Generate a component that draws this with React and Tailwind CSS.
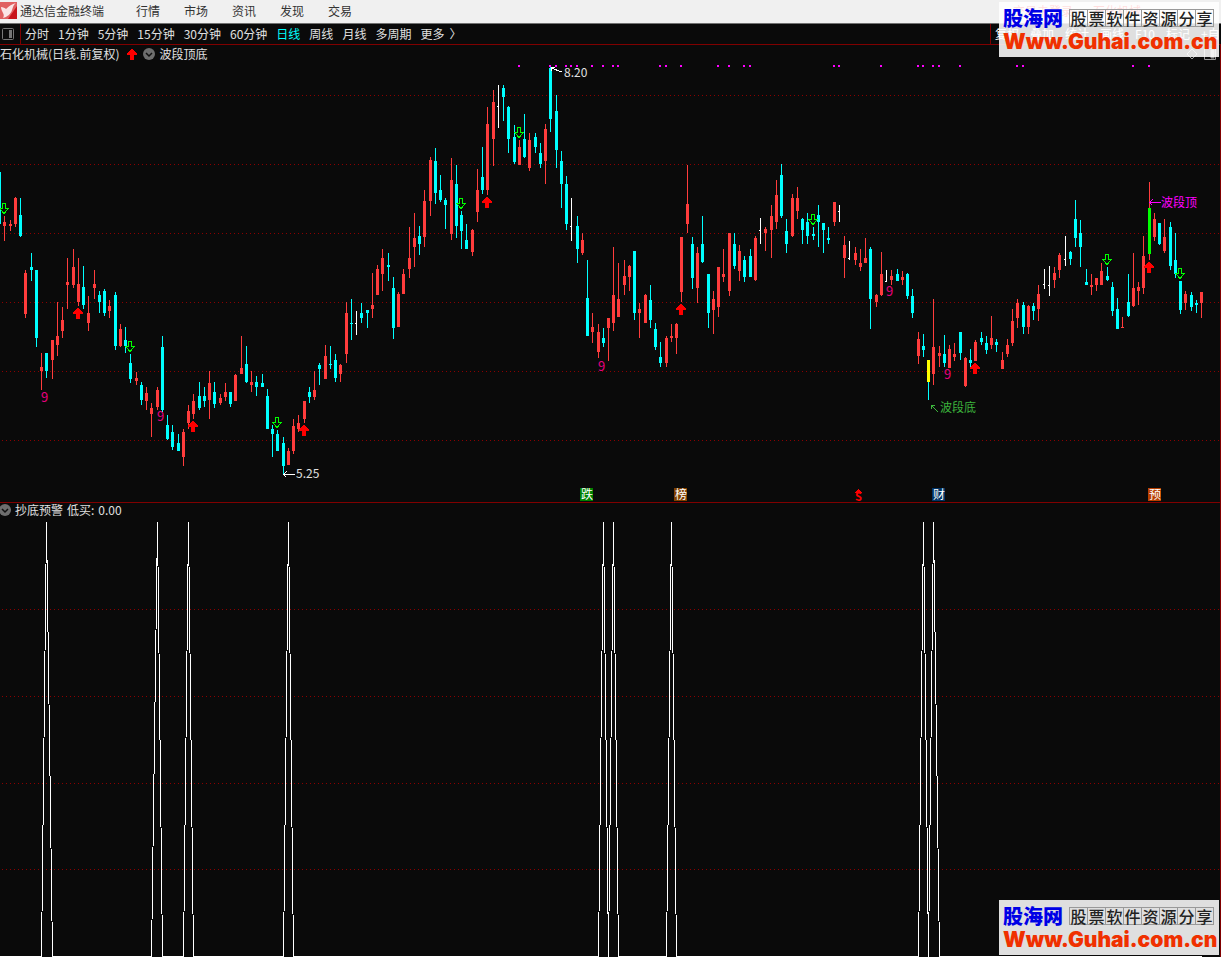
import React from 'react';

// [high, low, body top, body bottom, kind]
// r = rising, c = falling, w = flat (body top is the tick), y / g = marked bars
const BARS = [
  [172, 224, 172, 224, 'c'], [216, 241, 222, 226, 'r'], [220, 231, 224, 226, 'r'], [197, 227, 198, 224, 'r'], [198, 237, 215, 236, 'c'],
  [270, 318, 273, 314, 'r'], [253, 281, 267, 270, 'c'], [270, 347, 270, 338, 'c'], [353, 390, 367, 371, 'r'], [353, 378, 353, 371, 'c'],
  [340, 379, 340, 360, 'r'], [302, 356, 336, 345, 'r'], [307, 338, 320, 331, 'r'], [258, 309, 282, 285, 'r'], [249, 288, 267, 285, 'r'],
  [258, 306, 284, 302, 'r'], [266, 309, 287, 305, 'c'], [296, 331, 313, 323, 'r'], [270, 299, 284, 288, 'r'], [291, 313, 295, 302, 'c'],
  [289, 316, 291, 313, 'c'], [300, 318, 306, 311, 'r'], [292, 350, 295, 346, 'c'], [324, 347, 329, 346, 'r'], [327, 353, 340, 346, 'c'],
  [354, 383, 363, 379, 'c'], [372, 385, 378, 381, 'r'], [382, 405, 385, 400, 'c'], [387, 410, 393, 401, 'r'], [403, 437, 408, 414, 'r'],
  [387, 410, 390, 407, 'r'], [336, 412, 347, 410, 'c'], [415, 440, 425, 439, 'c'], [425, 450, 432, 447, 'c'], [434, 451, 443, 451, 'c'],
  [429, 466, 432, 457, 'r'], [405, 429, 411, 423, 'r'], [394, 419, 401, 414, 'r'], [382, 410, 396, 408, 'c'], [387, 407, 396, 401, 'c'],
  [371, 419, 383, 400, 'r'], [382, 408, 392, 404, 'c'], [394, 405, 398, 403, 'r'], [383, 401, 392, 397, 'r'], [392, 407, 392, 404, 'c'],
  [374, 401, 375, 401, 'r'], [336, 374, 368, 374, 'r'], [346, 383, 364, 382, 'c'], [371, 392, 382, 385, 'r'], [376, 396, 382, 387, 'c'],
  [374, 387, 383, 387, 'c'], [389, 429, 396, 429, 'c'], [425, 457, 429, 434, 'c'], [430, 451, 434, 451, 'c'], [437, 475, 443, 466, 'c'],
  [448, 465, 451, 465, 'r'], [419, 454, 426, 451, 'r'], [415, 432, 423, 429, 'r'], [401, 423, 401, 419, 'r'], [387, 403, 392, 397, 'c'],
  [371, 400, 390, 397, 'r'], [363, 385, 365, 369, 'c'], [345, 379, 356, 379, 'r'], [346, 369, 364, 365, 'c'], [354, 382, 360, 378, 'c'],
  [364, 382, 365, 374, 'r'], [302, 363, 313, 354, 'r'], [299, 340, 323, 324, 'c'], [311, 335, 323, 324, 'w'], [303, 323, 313, 318, 'c'],
  [310, 328, 310, 313, 'c'], [273, 318, 305, 309, 'r'], [265, 295, 269, 295, 'r'], [249, 291, 258, 274, 'r'], [253, 281, 265, 267, 'c'],
  [277, 339, 288, 328, 'c'], [292, 327, 294, 327, 'r'], [269, 294, 274, 294, 'r'], [227, 278, 258, 269, 'r'], [213, 267, 238, 247, 'r'],
  [226, 255, 236, 244, 'c'], [190, 247, 201, 237, 'r'], [157, 216, 160, 201, 'r'], [148, 204, 161, 193, 'c'], [175, 202, 190, 200, 'c'],
  [198, 229, 200, 205, 'c'], [158, 240, 180, 234, 'r'], [165, 238, 184, 226, 'c'], [211, 249, 215, 231, 'c'], [224, 249, 240, 249, 'c'],
  [229, 256, 230, 252, 'r'], [169, 222, 190, 212, 'r'], [147, 194, 177, 190, 'c'], [107, 195, 124, 190, 'r'], [90, 166, 102, 139, 'r'],
  [85, 128, 106, 107, 'w'], [85, 121, 88, 97, 'c'], [106, 153, 107, 139, 'c'], [125, 164, 137, 162, 'c'], [140, 165, 147, 165, 'r'],
  [114, 158, 139, 157, 'c'], [133, 171, 140, 168, 'r'], [133, 153, 137, 147, 'c'], [143, 168, 153, 164, 'c'], [124, 184, 129, 161, 'r'],
  [67, 132, 68, 119, 'c'], [95, 168, 111, 150, 'c'], [151, 208, 161, 184, 'c'], [176, 230, 184, 224, 'c'], [198, 241, 226, 227, 'w'],
  [216, 263, 226, 249, 'c'], [233, 255, 240, 253, 'r'], [260, 336, 298, 336, 'c'], [313, 343, 327, 332, 'r'], [324, 358, 332, 352, 'r'],
  [328, 347, 338, 343, 'c'], [318, 361, 318, 328, 'r'], [247, 331, 295, 323, 'r'], [263, 317, 299, 317, 'r'], [260, 295, 276, 285, 'r'],
  [265, 291, 266, 277, 'r'], [251, 320, 251, 313, 'c'], [303, 338, 309, 313, 'r'], [294, 323, 295, 323, 'r'], [285, 328, 300, 320, 'c'],
  [323, 350, 329, 347, 'c'], [342, 367, 357, 363, 'c'], [336, 367, 338, 363, 'r'], [324, 342, 336, 338, 'r'], [323, 354, 324, 338, 'r'],
  [237, 302, 237, 292, 'r'], [165, 233, 204, 224, 'r'], [237, 289, 244, 278, 'c'], [247, 303, 253, 288, 'r'], [216, 263, 244, 262, 'c'],
  [274, 328, 274, 313, 'c'], [291, 334, 299, 310, 'r'], [267, 317, 267, 307, 'r'], [249, 282, 274, 277, 'r'], [233, 296, 233, 291, 'r'],
  [233, 269, 244, 266, 'c'], [245, 281, 251, 271, 'r'], [256, 282, 260, 277, 'c'], [249, 277, 256, 277, 'c'], [236, 281, 238, 280, 'r'],
  [218, 244, 230, 231, 'w'], [227, 251, 229, 233, 'r'], [205, 258, 216, 230, 'r'], [180, 229, 195, 222, 'r'], [164, 218, 175, 216, 'c'],
  [219, 253, 231, 244, 'c'], [194, 237, 198, 236, 'r'], [187, 219, 198, 211, 'r'], [218, 244, 219, 230, 'c'], [213, 244, 222, 236, 'c'],
  [227, 240, 234, 236, 'c'], [205, 247, 215, 222, 'c'], [223, 253, 223, 230, 'c'], [227, 244, 238, 240, 'c'], [202, 226, 202, 222, 'r'],
  [205, 222, 211, 212, 'w'], [236, 278, 245, 258, 'r'], [241, 260, 258, 259, 'w'], [247, 265, 253, 260, 'r'], [249, 271, 263, 267, 'r'],
  [238, 263, 258, 263, 'r'], [247, 329, 249, 299, 'c'], [294, 307, 295, 302, 'r'], [252, 296, 274, 295, 'r'], [270, 282, 281, 282, 'w'],
  [270, 285, 276, 280, 'r'], [269, 281, 274, 281, 'c'], [271, 285, 277, 280, 'r'], [273, 299, 274, 296, 'c'], [289, 318, 296, 313, 'c'],
  [332, 364, 339, 356, 'r'], [334, 357, 346, 350, 'c'], [360, 400, 360, 382, 'y'], [299, 385, 347, 374, 'r'], [346, 367, 353, 356, 'r'],
  [335, 367, 354, 363, 'c'], [345, 368, 349, 368, 'r'], [343, 361, 354, 357, 'r'], [332, 360, 332, 353, 'c'], [357, 387, 358, 386, 'r'],
  [349, 367, 360, 363, 'c'], [340, 361, 342, 361, 'r'], [332, 345, 338, 342, 'c'], [336, 354, 343, 350, 'c'], [316, 349, 338, 345, 'r'],
  [339, 352, 342, 345, 'c'], [352, 369, 360, 369, 'r'], [339, 357, 345, 354, 'r'], [309, 346, 321, 343, 'r'], [299, 328, 303, 318, 'r'],
  [302, 334, 305, 327, 'c'], [305, 334, 306, 327, 'r'], [303, 320, 306, 311, 'c'], [285, 321, 294, 309, 'r'], [269, 289, 284, 285, 'w'],
  [266, 296, 285, 286, 'w'], [267, 288, 273, 280, 'r'], [253, 278, 255, 270, 'r'], [236, 266, 259, 260, 'w'], [251, 265, 252, 259, 'c'],
  [200, 247, 219, 238, 'c'], [220, 267, 233, 247, 'c'], [269, 285, 282, 285, 'c'], [274, 295, 285, 287, 'r'], [278, 291, 278, 285, 'r'],
  [263, 285, 271, 285, 'r'], [267, 281, 276, 280, 'c'], [282, 316, 287, 311, 'c'], [298, 329, 309, 329, 'c'], [317, 328, 327, 328, 'r'],
  [274, 317, 302, 316, 'c'], [253, 307, 288, 306, 'r'], [282, 305, 287, 291, 'r'], [236, 294, 256, 288, 'r'], [182, 260, 208, 254, 'g'],
  [213, 241, 219, 237, 'r'], [223, 245, 223, 244, 'c'], [219, 253, 237, 251, 'r'], [222, 270, 227, 266, 'c'], [233, 278, 260, 274, 'c'],
  [281, 314, 281, 310, 'c'], [291, 310, 294, 303, 'r'], [292, 311, 295, 307, 'c'], [300, 313, 303, 305, 'c'], [292, 318, 292, 303, 'r'],
];

const WICK = { r: '#ff3c3c', c: '#00ffff', w: '#ffffff', y: '#00ffff', g: '#ff3c3c' };
const BODY = { ...WICK, y: '#ffff00', g: '#00ff00' };

const barX = (i) => Math.floor(i * 5.249 - 0.384);

const DOTS = [
  519, 550, 556, 566, 571, 577, 592, 603, 613, 618, 660, 666, 681, 718, 729, 744, 750, 834, 839,
  881, 918, 923, 933, 939, 960, 1017, 1023, 1133, 1149,
];
const BUYS = [[78, 308], [193, 421], [304, 425], [487, 197], [681, 304], [975, 363], [1149, 262]];
const SELLS = [[4, 203], [130, 341], [277, 417], [461, 198], [519, 127], [813, 214], [1107, 254], [1180, 268]];
const NINES = [[41, 402], [157, 421], [598, 371], [886, 296], [944, 379]];
const BADGES = [
  { x: 580, text: '跌', fill: '#008000' },
  { x: 674, text: '榜', fill: '#804000' },
  { x: 932, text: '财', fill: '#003366' },
  { x: 1148, text: '预', fill: '#b84000' },
];
const SIGNALS = [46, 157, 188, 288, 603, 613, 671, 923, 933];

const MENU = ['行情', '市场', '资讯', '发现', '交易'];
const PERIODS = ['分时', '1分钟', '5分钟', '15分钟', '30分钟', '60分钟', '日线', '周线', '月线', '多周期', '更多'];
const TOOLS = ['复权', '叠加', '统计', '画线', 'F10', '标记', '+自'];

const UP_ARROW = 'M-1 0h2v1h1v1h1v1h1v1h1v2h-3v5h-4v-5h-3v-2h1v-1h1v-1h1v-1h1z';

const GridLines = ({ rows }) =>
  rows.map((y) => (
    <line key={y} x1="2" x2="1220" y1={y + 0.5} y2={y + 0.5} stroke="#8c0000" strokeDasharray="1 3" />
  ));

const Chevron = () => (
  <svg className="size-3 shrink-0" viewBox="0 0 12 12" aria-hidden="true">
    <circle cx="6" cy="6" r="6" fill="#6e6e6e" />
    <path d="M3 5l3 3 3-3" fill="none" stroke="#111" strokeWidth="1.5" />
  </svg>
);

const PriceChart = () => (
  <svg className="block w-full" viewBox="0 63 1220 439" shapeRendering="crispEdges" role="img" aria-label="日线">
    <GridLines rows={[95, 164, 233, 302, 371, 440]} />
    {BARS.map(([high, low, top, bottom, kind], i) => {
      const x = barX(i);
      return (
        <g key={i}>
          <rect x={x} y={high} width="1" height={low - high} fill={WICK[kind]} />
          <rect x={x - 1} y={top} width={kind === 'w' ? 2 : 3} height={bottom - top} fill={BODY[kind]} />
        </g>
      );
    })}
    {DOTS.map((x) => (
      <rect key={x} x={x - 1} y="65" width="2" height="2" fill="#ff00ff" />
    ))}
    {BUYS.map(([x, y]) => (
      <path key={x} d={UP_ARROW} transform={`translate(${x} ${y})`} fill="#ff0000" />
    ))}
    {SELLS.map(([x, y]) => (
      <path
        key={x}
        d="M-1.5 .5h3v5h3l-4.5 5-4.5-5h3z"
        transform={`translate(${x} ${y})`}
        fill="none"
        stroke="#00ff00"
      />
    ))}
    <g className="text-xs">
      {NINES.map(([x, y]) => (
        <text key={x} x={x} y={y} fill="#e6007e" fontSize="13">9</text>
      ))}
      <path d="M562 72l-11-4m4-1h-4l1 4" fill="none" stroke="#fff" />
      <text x="564" y="77" fill="#e0e0e0">8.20</text>
      <path d="M294.500 474.500h-11m3-3l-3 3 3 3" fill="none" stroke="#fff" />
      <text x="296" y="478" fill="#e0e0e0">5.25</text>
      <path d="M1160.500 202.500h-11m3-3l-3 3 3 3" fill="none" stroke="#ff00ff" />
      <text x="1161" y="207" fill="#ff00ff">波段顶</text>
      <path d="M938 412l-7-7m4 0h-4v4" fill="none" stroke="#3cb43c" />
      <text x="940" y="412" fill="#3cb43c">波段底</text>
      {BADGES.map(({ x, text, fill }) => (
        <g key={x}>
          <rect x={x} y="488" width="13" height="13" fill={fill} />
          <text x={x + 1} y="499" fill="#fff">{text}</text>
        </g>
      ))}
      <path d="M855 493l3.500-4 3.500 4z" fill="#ff0000" />
      <text x="855" y="501" fill="#ff0000" fontSize="11" fontWeight="700">S</text>
    </g>
  </svg>
);

const SignalChart = () => {
  const points = BARS.map((_, i) => {
    const x = barX(i);
    return `${x + 0.5},${SIGNALS.includes(x) ? 522 : 956.5}`;
  }).join(' ');
  return (
    <svg className="block w-full" viewBox="0 519 1220 438" shapeRendering="crispEdges" role="img" aria-label="抄底预警">
      <GridLines rows={[609, 696, 783, 869]} />
      <polyline points={points} fill="none" stroke="#fff" strokeLinejoin="bevel" />
    </svg>
  );
};

const Watermark = ({ className }) => (
  <div className={`absolute right-0.5 h-[55px] w-[220px] bg-white/87 px-1 pt-1 ${className}`}>
    <div className="flex h-6 items-center justify-between">
      <span className="text-xl leading-none font-black text-[#0000e6]">股海网</span>
      <span className="mr-px flex border-y border-l border-[#999]">
        {[...'股票软件资源分享'].map((char) => (
          <span key={char} className="w-[18px] border-r border-[#999] text-center text-base leading-4 font-medium text-[#222]">
            {char}
          </span>
        ))}
      </span>
    </div>
    <div className="font-['Inter','DejaVu_Sans',sans-serif] text-[21px] leading-6 font-black text-[#f03000]">Www.Guhai.com.cn</div>
  </div>
);

const App = () => {
  return (
    <div className="relative min-h-screen overflow-hidden bg-[#0a0a0a] font-['Noto_Sans_CJK_SC',sans-serif] text-xs text-[#e0e0e0]">
      <header className="flex h-6 items-center border-b border-[#707070] bg-[#f0f0f0] pb-0.5 text-[#333]">
        <svg className="mr-[3px] size-[17px]" viewBox="0 0 17 17" aria-hidden="true">
          <rect width="17" height="17" fill="#c8141a" />
          <path d="M0 0h17v4L8 17H0z" fill="#e06060" />
          <path d="M1 5c2 0 4 1 5 2 3-3 6-5 10-6-3 2-3 5-4 7-1 4-5 7-9 8 1-2 1-3 0-5-1-2-2-4-2-6z" fill="#fbe4e4" />
        </svg>
        <h1>通达信金融终端</h1>
        <nav className="ml-8 flex gap-6">
          {MENU.map((item) => (
            <a key={item} href="#">{item}</a>
          ))}
        </nav>
        <div className="mr-20 ml-auto flex gap-5 text-[#ff0000]">
          <span>交易未登录</span>
          <span>石化机械</span>
        </div>
      </header>

      <div className="flex h-[21px] items-center border-b border-[#800000]">
        <button className="ml-0.5 h-3 w-[18px]" aria-label="侧栏">
          <svg className="h-3 w-3" viewBox="0 0 12 12">
            <rect x=".5" y=".5" width="11" height="11" rx="1" fill="none" stroke="#777" />
            <rect x="7" y="2" width="3" height="8" fill="#777" />
          </svg>
        </button>
        <div className="flex h-full items-center gap-[9px] border-l border-[#800000] pl-1">
          {PERIODS.map((item) => (
            <button key={item} className={item === '日线' ? 'text-[#00ffff]' : ''}>{item}</button>
          ))}
          <span className="-ml-1">〉</span>
        </div>
        <div className="ml-auto flex h-full w-[231px] shrink-0 items-center gap-[11px] overflow-hidden border-l border-[#800000] pl-1 whitespace-nowrap text-white">
          {TOOLS.map((item) => (
            <button key={item}>{item}</button>
          ))}
        </div>
      </div>

      <main className="border-r border-[#800000]">
        <section>
          <div className="flex h-[18px] items-center">
            <h2>石化机械(日线.前复权)</h2>
            <svg className="mr-1.5 ml-2 h-[11px] w-2.5" viewBox="-5 0 10 11" shapeRendering="crispEdges" aria-hidden="true">
              <path d={UP_ARROW} fill="#ff0000" />
            </svg>
            <Chevron />
            <span className="ml-1">波段顶底</span>
            <svg className="mr-1 ml-auto h-3 w-8" viewBox="0 0 32 12" fill="none" stroke="#999" aria-hidden="true">
              <path d="M8 1l5 5-5 5-5-5zM20.500 .5h11v11h-11z" />
              <path d="M27 2h3v8h-3z" fill="#999" />
            </svg>
          </div>
          <PriceChart />
        </section>
        <section className="border-t border-[#800000]">
          <div className="flex h-4 items-center gap-1 pb-0.5">
            <span className="-ml-px flex"><Chevron /></span>
            <h2>抄底预警</h2>
            <span>低买:</span>
            <span>0.00</span>
          </div>
          <SignalChart />
        </section>
      </main>

      <Watermark className="top-0.5" />
      <Watermark className="bottom-0.5" />
    </div>
  );
};

export default App;
